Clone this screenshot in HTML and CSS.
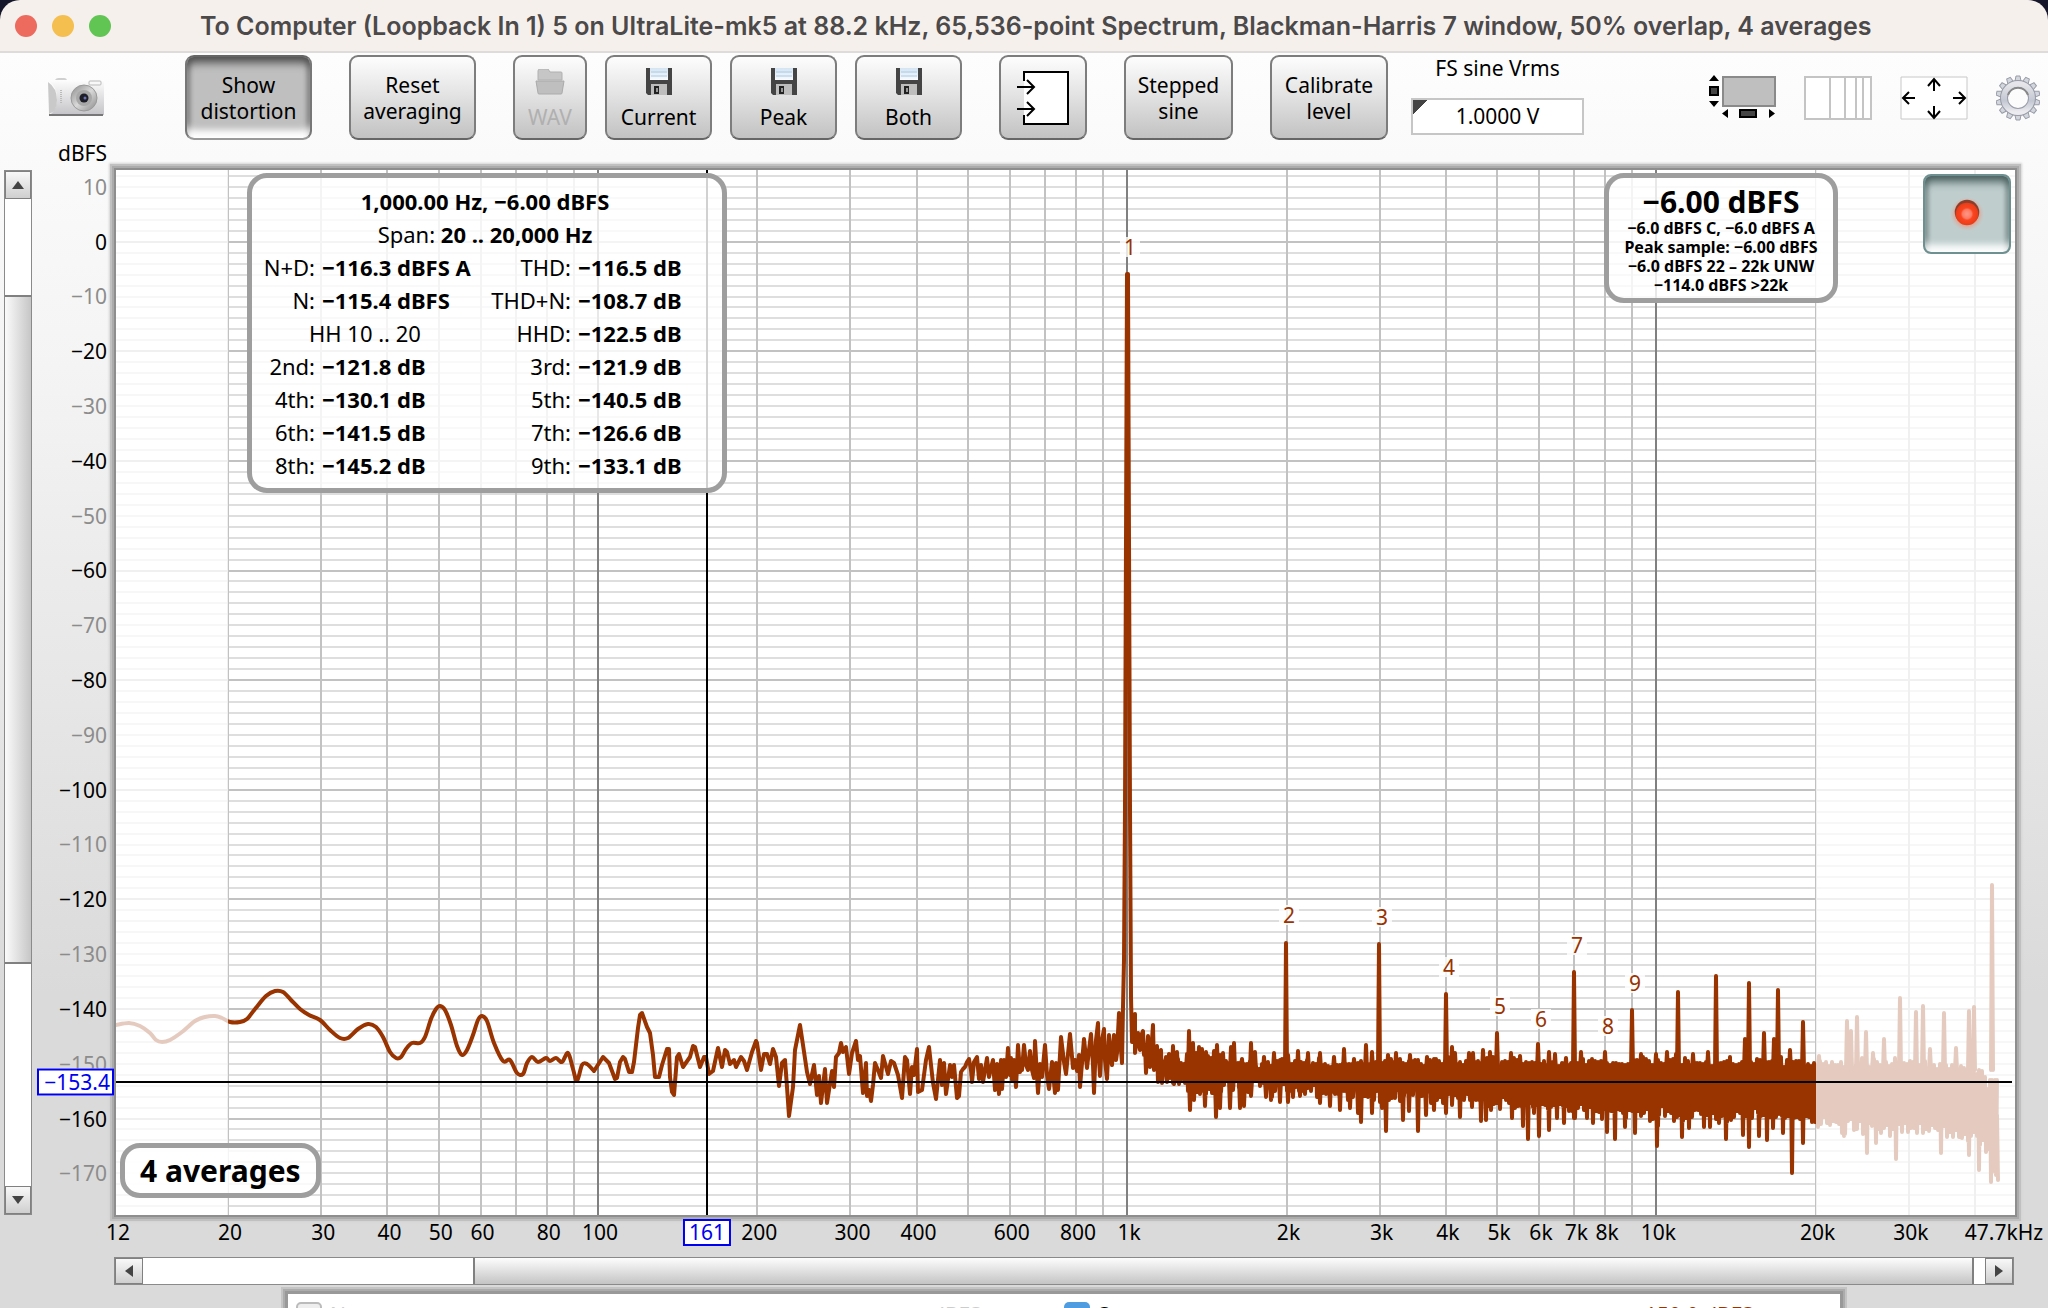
FILE: index.html
```html
<!DOCTYPE html>
<html lang="en">
<head>
<meta charset="utf-8">
<title>Spectrum</title>
<link rel="stylesheet" href="styles.css">
</head>
<body>
<svg class="defs" width="0" height="0" aria-hidden="true">
  <defs>
    <linearGradient id="metal" x1="0" y1="0" x2="0" y2="1"><stop offset="0" stop-color="#fdfdfd"/><stop offset="1" stop-color="#c4c4c8"/></linearGradient>
    <linearGradient id="sheet" x1="0" y1="0" x2="0" y2="1"><stop offset="0" stop-color="#d4e4f2"/><stop offset="1" stop-color="#f8fbfe"/></linearGradient>
    <linearGradient id="lens" x1="0" y1="0" x2="1" y2="1"><stop offset="0" stop-color="#8c8c8c"/><stop offset=".5" stop-color="#d8d8d8"/><stop offset="1" stop-color="#8a8a8a"/></linearGradient>
    <linearGradient id="steel" x1="0" y1="0" x2="0" y2="1"><stop offset="0" stop-color="#e6e6ea"/><stop offset=".6" stop-color="#c3c7d2"/><stop offset="1" stop-color="#ececf0"/></linearGradient>
    <radialGradient id="lamp"><stop offset="0" stop-color="#ff9888"/><stop offset=".4" stop-color="#ff7a62"/><stop offset=".55" stop-color="#fa4520"/><stop offset="1" stop-color="#e83c18"/></radialGradient>
    <radialGradient id="glow"><stop offset=".6" stop-color="#ff6a40" stop-opacity=".5"/><stop offset="1" stop-color="#ff9a80" stop-opacity="0"/></radialGradient>
    <symbol id="floppy" viewBox="0 0 26 28">
      <path d="M0 1h26v27H2l-2-2z" fill="#444"/>
      <path d="M4 1h18v12H4z" fill="url(#sheet)"/>
      <path d="M5 5h16M5 9h16" stroke="#a9c9e4" stroke-width="1"/>
      <path d="M5 17h16v11H5z" fill="#bdbdbd"/>
      <path d="M8 19h5v8H8z" fill="#222"/><path d="M10 21h2v4h-2z" fill="#999"/>
    </symbol>
  </defs>
</svg>
<main class="window">
  <header class="titlebar">
    <div class="lights"><span class="light close"></span><span class="light minimise"></span><span class="light zoom"></span></div>
    <h1 class="title">To Computer (Loopback In 1) 5 on UltraLite-mk5 at 88.2 kHz, 65,536-point Spectrum, Blackman-Harris 7 window, 50% overlap, 4 averages</h1>
  </header>

  <div class="content">
    <div class="toolbar">
      <button class="icon-button camera" aria-label="Capture">
        <svg width="56" height="40" viewBox="0 0 56 40">
          <path d="M7 3q0-3 4-3h5q3 0 3 3z" fill="#d0d0d0"/>
          <path d="M0 2h54q2 0 2 2v33H2q7-6 7-17T0 2z" fill="url(#metal)"/>
          <path d="M0 4q9 6 9 18T1 36z" fill="#c9c9c9"/>
          <path d="M1 37h54" stroke="#777" stroke-width="2"/>
          <path d="M13 12v14" stroke="#bbb" stroke-width="2" stroke-dasharray="1 1"/>
          <rect x="41" y="3" width="12" height="4" rx="1" fill="#f8f8f8" stroke="#b9b9b9"/>
          <circle cx="36" cy="20" r="13" fill="url(#lens)" stroke="#9a9a9a"/>
          <circle cx="36" cy="20" r="8" fill="#a8a8a8"/>
          <circle cx="36" cy="20" r="4.500" fill="#1d1d28"/>
          <circle cx="37" cy="20" r="1.500" fill="#6870b0"/>
        </svg>
      </button>
      <button class="button wide pressed">Show<br>distortion</button>
      <button class="button wide">Reset<br>averaging</button>
      <div class="saves">
        <button class="button small stacked" disabled>
          <svg width="30" height="26" viewBox="0 0 30 26"><path d="M3 11V2q0-2 2-2h8l2 3h11q1 0 1 1v7z" fill="#c6c6c6" stroke="#b0b0b0"/><path d="M1 12h28l-2 12q0 1-1 1H4q-1 0-1-1z" fill="#bfbfbf" stroke="#aaa"/></svg>
          WAV
        </button>
        <button class="button medium stacked"><svg width="26" height="28"><use href="#floppy"/></svg>Current</button>
        <button class="button medium stacked"><svg width="26" height="28"><use href="#floppy"/></svg>Peak</button>
        <button class="button medium stacked"><svg width="26" height="28"><use href="#floppy"/></svg>Both</button>
      </div>
      <button class="button input" aria-label="Select input">
        <svg width="54" height="56" viewBox="0 0 54 56"><path d="M8 2h44v52H8z" fill="#fff"/><path d="M8 11V2h44v52H8v-9" fill="none" stroke="#000" stroke-width="2"/><path d="M1 17h17M11 10l7 7-7 7M1 39h17M11 32l7 7-7 7" fill="none" stroke="#000" stroke-width="2"/></svg>
      </button>
      <button class="button step">Stepped<br>sine</button>
      <button class="button calibrate">Calibrate<br>level</button>
      <div class="field">
        <label for="vrms">FS sine Vrms</label>
        <input id="vrms" type="text" value="1.0000 V">
      </div>
      <div class="tools">
        <button class="icon-button" aria-label="Scrollbars">
          <svg width="67" height="46" viewBox="0 0 67 46"><rect x="14" y="2" width="52" height="29" fill="#bfbfbf" stroke="#8a8a8a" stroke-width="2"/><path d="M0 6l5-6 5 6zM0 26l5 6 5-6zM19 34v9l-6-4.500zM60 34v9l6-4.500z" fill="#000"/><rect x="1" y="12" width="8" height="8" fill="#444" stroke="#000" stroke-width="2"/><rect x="31" y="35" width="16" height="7" fill="#444" stroke="#000" stroke-width="2"/></svg>
        </button>
        <button class="icon-button" aria-label="Frequency axis">
          <svg width="68" height="46" viewBox="0 0 68 46"><path d="M1 2h66v42H1zM26 2v42M41 2v42M52 2v42M59 2v42" fill="#fff" stroke="#c4c4c4" stroke-width="2"/></svg>
        </button>
        <button class="icon-button" aria-label="Graph limits">
          <svg width="68" height="46" viewBox="0 0 68 46"><path d="M1 2h66v42H1z" fill="#fff" stroke="#c8c8c8"/><path d="M34 16V5M28 11l6-7 6 7M34 31v11M28 36l6 7 6-7M15 23H3M9 17l-6 6 6 6M53 23h12M59 17l6 6-6 6" fill="none" stroke="#000" stroke-width="2"/></svg>
        </button>
        <button class="icon-button" aria-label="Settings">
          <svg width="44" height="46" viewBox="-22 -23 44 46"><g id="gear-teeth"></g><circle r="14" fill="none" stroke="#999da8" stroke-width="8"/><circle r="14" fill="none" stroke="url(#steel)" stroke-width="6"/><path d="M-10-3a10.500 10.500 0 0 1 20 0" fill="none" stroke="#888" stroke-width="2"/></svg>
        </button>
      </div>
    </div>

    <div class="analyser">
      <div class="unit">dBFS</div>
      <div class="scroll vertical">
        <button class="scroll-end" aria-label="Scroll up"><svg width="12" height="8"><path d="M0 8l6-8 6 8z" fill="#444"/></svg></button>
        <div class="gap v-before"></div>
        <div class="thumb"></div>
        <div class="gap v-after"></div>
        <button class="scroll-end" aria-label="Scroll down"><svg width="12" height="8"><path d="M0 0l6 8 6-8z" fill="#444"/></svg></button>
      </div>
      <div class="level-axis" id="level-axis"></div>
      <div class="plot">
        <svg class="chart" id="chart" viewBox="0 0 1899 1045" preserveAspectRatio="none"></svg>
        <div class="marks" id="marks"></div>

        <section class="panel distortion">
          <table>
            <colgroup><col class="label-a"><col class="value-a"><col class="label-b"><col></colgroup>
            <tr><td colspan="4" class="centre"><b>1,000.00 Hz, −6.00 dBFS</b></td></tr>
            <tr><td colspan="4" class="centre">Span: <b>20 .. 20,000 Hz</b></td></tr>
            <tr><th>N+D:</th><td>−116.3 dBFS A</td><th>THD:</th><td>−116.5 dB</td></tr>
            <tr><th>N:</th><td>−115.4 dBFS</td><th>THD+N:</th><td>−108.7 dB</td></tr>
            <tr><td colspan="2" class="harmonics">HH 10 .. 20</td><th>HHD:</th><td>−122.5 dB</td></tr>
            <tr><th>2nd:</th><td>−121.8 dB</td><th>3rd:</th><td>−121.9 dB</td></tr>
            <tr><th>4th:</th><td>−130.1 dB</td><th>5th:</th><td>−140.5 dB</td></tr>
            <tr><th>6th:</th><td>−141.5 dB</td><th>7th:</th><td>−126.6 dB</td></tr>
            <tr><th>8th:</th><td>−145.2 dB</td><th>9th:</th><td>−133.1 dB</td></tr>
          </table>
        </section>

        <section class="panel level">
          <p class="level-main">−6.00 dBFS</p>
          <p>−6.0 dBFS C, −6.0 dBFS A</p>
          <p>Peak sample: −6.00 dBFS</p>
          <p>−6.0 dBFS 22 – 22k UNW</p>
          <p>−114.0 dBFS &gt;22k</p>
        </section>

        <button class="record" aria-label="Record">
          <svg width="34" height="34" viewBox="0 0 36 36"><circle cx="18" cy="18" r="18" fill="url(#glow)"/><circle cx="18" cy="16" r="13" fill="#8a3f2c"/><circle cx="18" cy="18" r="12" fill="url(#lamp)"/></svg>
        </button>

        <section class="panel averages">4 averages</section>
      </div>
      <div class="frequency-axis" id="frequency-axis"></div>
      <div class="scroll horizontal">
        <button class="scroll-end" aria-label="Scroll left"><svg width="8" height="12"><path d="M8 0L0 6l8 6z" fill="#444"/></svg></button>
        <div class="gap h-before"></div>
        <div class="thumb"></div>
        <div class="gap h-after"></div>
        <button class="scroll-end" aria-label="Scroll right"><svg width="8" height="12"><path d="M0 0l8 6-8 6z" fill="#444"/></svg></button>
      </div>
    </div>

    <div class="legend">
      <label class="entry dim"><input type="checkbox" checked>No trace</label>
      <span class="reading dim">dBFS</span>
      <label class="entry"><input type="checkbox" checked>S</label>
      <span class="reading trace">−150.0 dBFS</span>
    </div>
  </div>
</main>
<script src="script.js"></script>
</body>
</html>
```
FILE: styles.css
```css
* { box-sizing: border-box; }

body {
  margin: 0;
  height: 100vh;
  overflow: hidden;
  background: #16162a;
  color: #000;
  font: 21px/26px "Noto Sans", sans-serif;
}

button, input { font: inherit; color: inherit; }
p, h1 { margin: 0; }
svg { display: block; }
.defs { position: absolute; }

.window {
  height: 100vh;
  display: flex;
  flex-direction: column;
  border-radius: 20px 20px 0 0;
  overflow: hidden;
}

.titlebar {
  flex: none;
  height: 53px;
  display: flex;
  align-items: center;
  gap: 89px;
  padding-left: 15px;
  background: #f6f0ed;
  border-bottom: 2px solid #dedcdb;
}
.lights { display: flex; gap: 15px; }
.light { width: 22px; height: 22px; border-radius: 50%; }
.close { background: #ec6a5e; }
.minimise { background: #f4bf4f; }
.zoom { background: #61c554; }
.title {
  font: 600 25px/48px Inter, sans-serif;
  color: #4b4949;
  white-space: nowrap;
}

.content {
  flex: 1;
  min-height: 0;
  display: flex;
  flex-direction: column;
  background: linear-gradient(#fdfdfd, #f4f4f4 25%, #dadada 75%, #dadada);
}

.toolbar {
  flex: none;
  display: flex;
  align-items: center;
  gap: 37px;
  height: 89px;
  padding: 0 8px 0 48px;
}
.icon-button { border: 0; padding: 0; background: none; }
.camera { margin-right: 44px; }
.button {
  height: 85px;
  padding: 0;
  border: 2px solid #7d7d7d;
  border-bottom-color: #666;
  border-radius: 9px;
  background: linear-gradient(#fdfdfd, #e4e4e4 45%, #c2c2c2);
}
.wide { width: 127px; }
.small { width: 74px; }
.medium { width: 107px; }
.input { width: 88px; }
.step { width: 109px; }
.calibrate { width: 118px; }
.pressed {
  border-color: #666 #777 #999;
  background: #bfbfbf;
  box-shadow: inset 0 9px 8px -3px #555, inset 0 -10px 7px -2px #fff, inset 3px 0 4px #777, inset -3px 0 4px #777;
}
.saves { display: flex; gap: 18px; }
.stacked {
  display: flex;
  flex-direction: column;
  align-items: center;
  justify-content: flex-end;
  gap: 9px;
  padding-bottom: 8px;
}
.button:disabled { color: #b0b0b0; }
.input { display: grid; place-items: center; }
.field {
  display: flex;
  flex-direction: column;
  align-items: center;
  gap: 17px;
  margin-left: -14px;
  padding-bottom: 6px;
}
.field input {
  width: 173px;
  height: 37px;
  padding: 0;
  text-align: center;
  border: 2px solid #c6c6c6;
  background: linear-gradient(135deg, #444 10px, #fff 10px);
}
.tools { display: flex; align-items: center; gap: 28px; margin-left: auto; }

.analyser {
  flex: 1;
  min-height: 0;
  display: grid;
  grid-template-columns: 28px 84px minmax(0, 1fr);
  grid-template-rows: 28px minmax(0, 1fr) 42px 28px;
  padding: 0 33px 0 4px;
}
.unit { grid-area: 1 / 1 / 2 / 3; text-align: right; padding-right: 9px; line-height: 22px; }
.level-axis { grid-area: 2 / 2; }
.plot { grid-area: 2 / 3; }
.frequency-axis { grid-area: 3 / 3; }
.level-axis, .frequency-axis, .plot { position: relative; }

.scroll { display: flex; border: 1px solid #8a8a8a; background: #fff; }
.vertical { grid-area: 2 / 1; flex-direction: column; }
.horizontal { grid-area: 4 / 3; margin: 0 1px 0 -2px; }
.scroll-end {
  flex: none;
  width: 28px;
  height: 28px;
  padding: 0;
  display: grid;
  place-items: center;
  border: 1px solid #808080;
  background: linear-gradient(#f8f8f8, #cfcfcf);
}
.vertical .scroll-end { width: auto; }
.horizontal .scroll-end { height: auto; }
.thumb { flex: 1; }
.vertical .thumb { border: solid #808080; border-width: 2px 0; background: linear-gradient(90deg, #fbfbfb, #c6c6c6); }
.horizontal .thumb { border: solid #808080; border-width: 0 2px; background: linear-gradient(#fdfdfd, #c4c4c4); }
.v-before { height: 96px; }
.v-after { height: 222px; }
.h-before { width: 330px; }
.h-after { width: 11px; }

.plot {
  background: #fff;
  box-shadow: 0 0 0 2px #8e8e8e, 0 0 0 4px #ababab, 0 0 0 6px #c0c0c0, 0 0 2px 7px #d4d4d4;
}
.chart { position: absolute; width: 100%; height: 100%; }
.chart path { vector-effect: non-scaling-stroke; fill: none; }
.grid-minor { stroke: #dedede; stroke-width: 2; }
.grid-major { stroke: #c2c2c2; stroke-width: 2; }
.grid-decade { stroke: #808080; stroke-width: 2; }
.spectrum { stroke: #993300; stroke-width: 4; stroke-linejoin: round; stroke-linecap: round; }
.chart .outside { fill: #fff; fill-opacity: .75; }
.cursor { stroke: #000; stroke-width: 2; }

.mark {
  position: absolute;
  transform: translate(-50%, -50%);
  padding: 0 4px;
  line-height: 20px;
  color: #993300;
  background: rgba(255, 255, 255, .8);
}

.tick { position: absolute; white-space: nowrap; }
.level-axis .tick { right: 9px; transform: translateY(-50%); }
.level-axis .half { color: #8c8c8c; }
.frequency-axis .tick { top: 4px; transform: translateX(-50%); }
.level-axis .cursor-value, .frequency-axis .cursor-value {
  padding: 0 2px;
  border: 2px solid #0000f0;
  background: #fff;
  color: #0000f0;
  line-height: 23px;
}
.level-axis .cursor-value { right: 2px; padding-left: 5px; z-index: 1; }
.frequency-axis .cursor-value { top: 4px; padding: 0 4px; }

.panel {
  position: absolute;
  border: 5px solid #9e9e9e;
  border-radius: 20px;
  background: rgba(255, 255, 255, .82);
}
.distortion { left: 131px; top: 3px; width: 480px; padding: 7px 0 6px; }
.distortion table { width: 100%; table-layout: fixed; border-collapse: collapse; font-size: 22px; line-height: 33px; }
.label-a { width: 63px; }
.value-a { width: 166px; }
.label-b { width: 90px; }
.distortion td { padding: 0 0 0 7px; font-weight: 700; white-space: nowrap; }
.distortion th { padding: 0; font-weight: 400; text-align: right; white-space: nowrap; }
.distortion .centre { padding: 0 4px 0 0; text-align: center; font-weight: 400; }
.distortion .harmonics { padding: 0 0 0 57px; font-weight: 400; }
.level {
  right: 177px;
  top: 3px;
  width: 234px;
  padding: 7px 0 3px;
  text-align: center;
  white-space: nowrap;
  font-size: 16px;
  font-weight: 700;
  line-height: 19px;
}
.level-main { font-size: 30px; line-height: 34px; }
.averages {
  left: 4px;
  bottom: 17px;
  padding: 0 15px;
  font-size: 30px;
  font-weight: 700;
  line-height: 45px;
}
.record {
  position: absolute;
  right: 4px;
  top: 4px;
  width: 88px;
  height: 80px;
  padding: 0;
  display: grid;
  place-items: center;
  border: 2px solid #6f9090;
  border-radius: 8px;
  background: #bfcdcd;
  box-shadow: inset 0 9px 8px -3px #4f6464, inset 0 -9px 7px -2px #fff, inset 3px 0 4px #708585, inset -3px 0 4px #708585;
}

.legend {
  flex: none;
  height: 14px;
  margin: 9px 208px 0 288px;
  padding: 8px 8px 0;
  display: grid;
  grid-template-columns: 636px 132px 569px auto;
  align-items: start;
  line-height: 27px;
  background: #fff;
  box-shadow: 0 0 0 3px #999, 0 0 0 5px #acacac, 0 0 1px 7px #c4c4c4;
  clip-path: inset(-7px -7px 0 -7px);
}
.legend .entry { display: flex; gap: 8px; }
.legend .entry input {
  appearance: none;
  flex: none;
  width: 26px;
  height: 26px;
  margin: 0;
  border-radius: 5px;
  background: #4f9de0;
}
.legend .dim input { background: #eee; border: 2px solid #bbb; }
.legend .dim { color: #ccc; }
.legend .trace { color: #993300; }
```
FILE: script.js
```js
const WIDTH = 1899;
const HEIGHT = 1045;

const freqX = f => 482 + 529.2 * Math.log10(f / 100);
const levelY = db => 71.7 - db * 5.48;
const px = v => Math.round(v);

/* Slowly varying trace below 100 Hz, as x,y pairs in chart units. */
const smooth = `0,855 13,853 24,856 34,863 40,870 46,872 54,870 66,862 79,851 89,847 99,846 106,848 114,852
124,852 131,849 139,839 150,826 159,821 167,822 175,830 184,839 193,845 204,850 214,860 224,868 232,868 242,859 252,854
260,857 267,867 274,882 280,888 285,887 290,879 296,873 304,873 309,867 315,849 320,839 324,836 329,840 335,855 341,876
346,885 351,880 357,865 362,850 366,846 371,851 378,873 387,891 394,890 401,903 407,904 411,893 416,887 422,892 430,888
434,891 440,888 446,892 452,883 457,899 461,911 466,895 471,894 478,901`;

/* Trace from there up to 1.15 kHz. */
const rough = `487,887 493,893 499,909 501,908 504,892 507,887
509,889 513,902 516,902 518,892 522,858 524,845 526,843 531,857 534,863 537,885 539,907 543,907 546,895 551,879 553,879
554,907 556,922 558,925 561,887 563,884 567,897 574,887 577,876 579,877 584,897 588,887 590,887 593,904 597,901 602,878
606,897 609,880 611,882 614,894 618,890 620,897 625,887 628,891 631,900 636,882 640,871 641,873 645,900 648,884 651,884
654,894 657,879 660,887 663,916 666,893 669,890 671,917 673,946 677,917 679,880 684,855 687,875 691,902 694,914 698,895
701,925 703,906 705,933 709,899 711,933 716,901 718,917 720,887 723,883 725,873 727,882 730,877 733,904 736,883 740,871
742,890 744,886 747,923 750,893 751,926 753,920 755,931 757,915 759,893 762,900 765,908 767,886 772,904 775,891 778,893
782,905 786,928 789,887 791,890 794,924 796,897 798,905 801,879 802,922 806,920 810,890 813,877 817,913 820,929 824,890
826,915 828,893 830,924 834,895 836,907 838,895 841,928 843,926 845,902 847,899 849,897 851,892 853,889 855,900 856,912
858,892 861,887 863,909 865,895 867,912 869,900 871,888 873,907 875,898 877,890 879,920 881,894 883,924 885,890 886,919
888,890 890,907 892,878 894,905 895,888 896,910 898,890 900,917 902,875 904,902 905,890 906,900 908,875 910,895 912,900
914,881 916,900 918,908 919,871 922,923 924,894 926,907 929,875 931,905 933,919 936,892 939,923 940,893 942,920 945,867
948,892 950,904 954,864 957,898 959,890 961,901 963,885 964,917 968,869 971,898 973,880 975,864 977,895 978,923 980,870
982,853 983,890 984,906 986,870 988,859 989,890 991,909 993,865 995,890 996,895 998,865 1000,890 1001,883 1003,843
1005,880 1006,893 1007,837 1008,790 1009,640 1011,104 1012,104 1014,640 1015,827 1016,872 1018,860 1019,844 1019,883 1021,868
1022,863 1024,880 1025,866 1027,861 1028,885 1029,875 1030,903 1032,866 1033,880 1034,897 1036,870 1037,855 1038,900
1040,880 1041,876 1042,912 1044,885 1045,880 1046,913 1048,895 1050,888`;

/* Noise floor above that: x, upper edge, lower edge. */
const floor = [
  [1050, 882, 913], [1068, 896, 913], [1072, 880, 926], [1090, 885, 922], [1110, 890, 916], [1130, 895, 918],
  [1170, 892, 918], [1220, 894, 926], [1262, 892, 928], [1300, 893, 922], [1360, 892, 930], [1400, 892, 936],
  [1450, 892, 936], [1500, 892, 942], [1550, 892, 944], [1600, 892, 945], [1650, 891, 947], [1699, 894, 952],
  [1760, 893, 957], [1800, 893, 960], [1840, 896, 964], [1868, 902, 972], [1874, 925, 994], [1878, 935, 1000], [1881, 950, 1003]
];

/* Single lines that stand out of the floor: x, tip. */
const tips = `1057,876 1061,882 1073,861 1077,873 1083,877 1090,882 1098,881 1101,875 1107,883 1115,877 1118,873 1126,889
1135,873 1139,882 1148,887 1158,883 1166,889 1172,885 1182,881 1192,883 1204,883 1218,887 1228,879 1238,889 1250,875 1256,882
1272,885 1280,883 1294,885 1311,887 1318,889 1336,877 1339,883 1353,883 1357,883 1367,880 1374,882 1395,883 1404,886
1422,874 1433,882 1439,884 1450,888 1465,882 1489,882 1525,884 1540,884 1551,882 1560,884 1577,884 1592,882 1600,886
1170,773 1263,774 1330,824 1381,863 1458,802 1516,840 1562,822 1600,806 1633,813 1629,869 1648,863 1658,869
1662,820 1674,880 1687,852 1703,886 1731,851 1735,861 1741,847 1750,862 1757,883 1768,869 1784,828 1800,842 1807,836
1814,879 1828,843 1840,878 1853,841 1858,837 1876,715
1058,914 1074,940 1089,936 1100,947 1104,938 1114,938 1124,938 1128,936 1135,926 1150,927 1155,930 1164,932 1172,932
1184,926 1204,933 1214,936 1224,940 1232,930 1242,943 1245,952 1256,943 1266,938 1270,961 1284,931 1287,950 1293,941
1302,961 1310,945 1318,940 1330,943 1344,947 1356,937 1365,951 1370,950 1396,948 1407,956 1412,969 1418,943 1423,966
1433,960 1441,948 1448,953 1458,948 1471,948 1477,953 1491,962 1499,969 1509,957 1519,963 1542,956 1567,951 1573,958
1588,957 1594,957 1611,952 1627,965 1633,977 1643,966 1651,970 1667,963 1676,1003 1687,973 1728,966 1751,983
1760,973 1780,989 1825,983 1853,985 1863,1000 1875,1012 1880,1005 1541,976 1566,967 1610,969`;

const points = text => text.trim().split(/\s+/).map(pair => pair.split(',').map(Number));

let seed = 7;
function noise() {
  seed = (seed * 16807) % 2147483647;
  return seed / 2147483647;
}

function edge(x) {
  let i = 1;
  while (i < floor.length - 1 && floor[i][0] < x) i++;
  const [x0, u0, l0] = floor[i - 1];
  const [x1, u1, l1] = floor[i];
  const t = (x - x0) / (x1 - x0);
  return [u0 + t * (u1 - u0), l0 + t * (l1 - l0)];
}

function spline(p) {
  let d = `M${p[0]}`;
  for (let i = 1; i < p.length; i++) {
    const a = p[Math.max(i - 2, 0)], b = p[i - 1], c = p[i], e = p[Math.min(i + 1, p.length - 1)];
    d += `C${b[0] + (c[0] - a[0]) / 6},${b[1] + (c[1] - a[1]) / 6} ${c[0] - (e[0] - b[0]) / 6},${c[1] - (e[1] - b[1]) / 6} ${c}`;
  }
  return d;
}

function tracePath() {
  let d = spline(points(smooth)) + points(rough).map(p => 'L' + p).join('');
  for (let x = 1050; x <= 1881; x += 3) {
    const [upper, lower] = edge(x);
    d += `L${x},${px(upper - 6 * noise() ** 2 + 5 * noise())}`;
    d += `L${x + 1},${px(lower + 12 * noise() ** 2 - 9 * noise())}`;
  }
  for (const [x, y] of points(tips)) {
    const root = y < 912 ? 900 : 910;
    d += `M${x - 1},${root}L${x},${y}L${x + 1},${root}`;
  }
  return d;
}

function gridPaths() {
  let minor = '', major = '', decade = '';
  for (let db = 12; db >= -176; db -= 2) {
    const line = `M0,${px(levelY(db))}H${WIDTH}`;
    if (db % 20 === 0) major += line; else minor += line;
  }
  for (const base of [10, 100, 1000, 10000]) {
    for (let n = 1; n < 10; n++) {
      const f = base * n;
      if (f < 20 || f > 40000) continue;
      const line = `M${px(freqX(f))},0V${HEIGHT}`;
      if (n === 1) decade += line; else major += line;
    }
  }
  return [['grid-minor', minor], ['grid-major', major], ['grid-decade', decade]];
}

const left = px(freqX(20));
const right = px(freqX(20000));
const cursorX = 591;
const cursorY = 912;
document.getElementById('chart').innerHTML =
  gridPaths().map(([name, d]) => `<path class="${name}" d="${d}"/>`).join('') +
  `<path class="spectrum" d="${tracePath()}"/>` +
  `<rect class="outside" width="${left}" height="${HEIGHT}"/>` +
  `<rect class="outside" x="${right}" width="${WIDTH - right}" height="${HEIGHT}"/>` +
  `<path class="cursor" d="M${cursorX},0V${HEIGHT}M0,${cursorY}H${WIDTH - 3}"/>`;

const percent = (v, whole) => (v / whole * 100).toFixed(3) + '%';

const harmonics = [[1014, 77], [1173, 745], [1266, 747], [1333, 797], [1384, 836], [1425, 849], [1461, 775], [1492, 856], [1519, 813]];
document.getElementById('marks').innerHTML = harmonics.map(([x, y], i) =>
  `<span class="mark" style="left:${percent(x, WIDTH)};top:${percent(y, HEIGHT)}">${i + 1}</span>`).join('');

let levels = '';
for (let db = 10; db >= -170; db -= 10) {
  levels += `<span class="tick${db % 20 ? ' half' : ''}" style="top:${percent(levelY(db), HEIGHT)}">${String(db).replace('-', '−')}</span>`;
}
levels += `<span class="tick cursor-value" style="top:${percent(cursorY, HEIGHT)}">−153.4</span>`;
document.getElementById('level-axis').innerHTML = levels;

const frequencies = [['12', 0], ['20', 20], ['30', 30], ['40', 40], ['50', 50], ['60', 60], ['80', 80], ['100', 100],
  ['200', 200], ['300', 300], ['400', 400], ['600', 600], ['800', 800], ['1k', 1000], ['2k', 2000], ['3k', 3000],
  ['4k', 4000], ['5k', 5000], ['6k', 6000], ['7k', 7000], ['8k', 8000], ['10k', 10000], ['20k', 20000], ['30k', 30000]];
document.getElementById('frequency-axis').innerHTML = frequencies.map(([text, f]) =>
  `<span class="tick" style="left:${percent((f ? freqX(f) : 0) + 2, WIDTH)}">${text}</span>`).join('') +
  `<span class="tick" style="left:${percent(1888, WIDTH)}">47.7kHz</span>` +
  `<span class="tick cursor-value" style="left:${percent(cursorX, WIDTH)}">161</span>`;

let teeth = '';
for (let i = 0; i < 14; i++) {
  teeth += `<path d="M-3-17L-2-22H2L3-17z" transform="rotate(${i * 360 / 14})" fill="#d4d6de" stroke="#999da8"/>`;
}
document.getElementById('gear-teeth').innerHTML = teeth;
```
